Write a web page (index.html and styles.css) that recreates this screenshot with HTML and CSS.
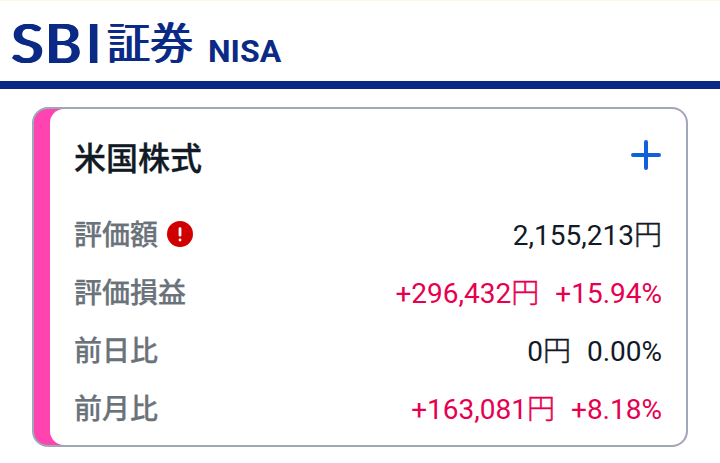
FILE: index.html
```html
<!DOCTYPE html>
<html lang="ja">
<head>
<meta charset="utf-8">
<title>SBI証券 NISA</title>
<link rel="stylesheet" href="styles.css">
</head>
<body>
<header class="header">
  <h1 class="brand"><span class="brand-sbi"><span class="brand-s">S</span><span class="brand-b">B</span><span class="brand-i">I</span></span><span class="brand-kanji">証券</span></h1>
  <span class="nisa">NISA</span>
</header>
<main class="card">
  <div class="content">
    <div class="card-head">
      <h2 class="title">米国株式</h2>
      <svg class="plus" viewBox="0 0 32 32"><path d="M16 3v26M3 16h26"/></svg>
    </div>
    <dl class="rows">
      <div class="row"><dt>評価額<svg class="alert" viewBox="0 0 26 26"><circle cx="13" cy="13" r="13"/><path d="M13 7.6v6.6M13 18.9v.2"/></svg></dt><dd><span>2,155,213<span class="yen">円</span></span></dd></div>
      <div class="row"><dt>評価損益</dt><dd class="gain"><span>+296,432<span class="yen">円</span></span><span>+15.94%</span></dd></div>
      <div class="row"><dt>前日比</dt><dd><span>0<span class="yen">円</span></span><span>0.00%</span></dd></div>
      <div class="row"><dt>前月比</dt><dd class="gain"><span>+163,081<span class="yen">円</span></span><span>+8.18%</span></dd></div>
    </dl>
  </div>
</main>
</body>
</html>
```
FILE: styles.css
```css
* { box-sizing: border-box; }
body { margin: 0; height: 463px; overflow: hidden; background: #fff; font-family: Roboto, "Noto Sans CJK JP", sans-serif; color: #121a26; }
.header { height: 89px; border-top: 1px solid #fff6e8; border-bottom: 8px solid #0a2a86; display: flex; align-items: flex-start; color: #0a2a86; padding-left: 11px; }
.brand { margin: 0; display: flex; font-weight: 400; line-height: 1; }
.brand-sbi { display: flex; font-family: Lato, sans-serif; font-size: 54px; font-weight: 400; padding-top: 15px; width: 96px; }
.brand-s, .brand-b, .brand-i { flex: none; transform-origin: left; }
.brand-s { width: 34px; transform: scaleX(1.08); text-shadow: 2px 0, 1px 0, -1px 0; }
.brand-b { width: 41px; transform: scaleX(1.02); text-shadow: 2px 0, 1px 0, -1px 0; }
.brand-i { text-shadow: 1.2px 0, -1px 0; }
.brand-kanji { font-size: 43px; font-weight: 400; padding-top: 22px; text-shadow: 1px 0, -.8px 0; }
.nisa { margin: 31px 0 0 15px; font-size: 32px; line-height: 38px; font-weight: 700; }
.card { margin: 18px 32px 0; width: 656px; height: 340px; border: 2px solid #9ea9b8; border-radius: 16px; overflow: hidden; background: #ff43b0; padding-left: 16px; }
.content { height: 100%; background: #fff; border-radius: 14px 0 0 14px; padding: 27px 24px 0; }
.card-head { display: flex; justify-content: space-between; height: 71px; }
.title { margin: 0; font-size: 32px; line-height: 46px; font-weight: 500; -webkit-text-stroke: .3px; }
.plus { width: 32px; height: 32px; margin: 3px 0 0; fill: none; stroke: #1060dc; stroke-width: 4; stroke-linecap: round; }
.rows { margin: 0; }
.row { height: 58px; display: flex; justify-content: space-between; align-items: center; font-size: 28px; line-height: 42px; }
dt { display: flex; align-items: center; color: #6a727a; font-weight: 500; -webkit-text-stroke: .25px; }
dd { margin: 0; display: flex; gap: 16px; }
.yen { font-weight: 300; -webkit-text-stroke: .5px; }
.gain { color: #e6004f; }
.alert { width: 26px; height: 26px; margin: -4px 0 0 9px; fill: #d10000; }
.alert path { stroke: #fff; stroke-width: 2.8; stroke-linecap: round; }
```
